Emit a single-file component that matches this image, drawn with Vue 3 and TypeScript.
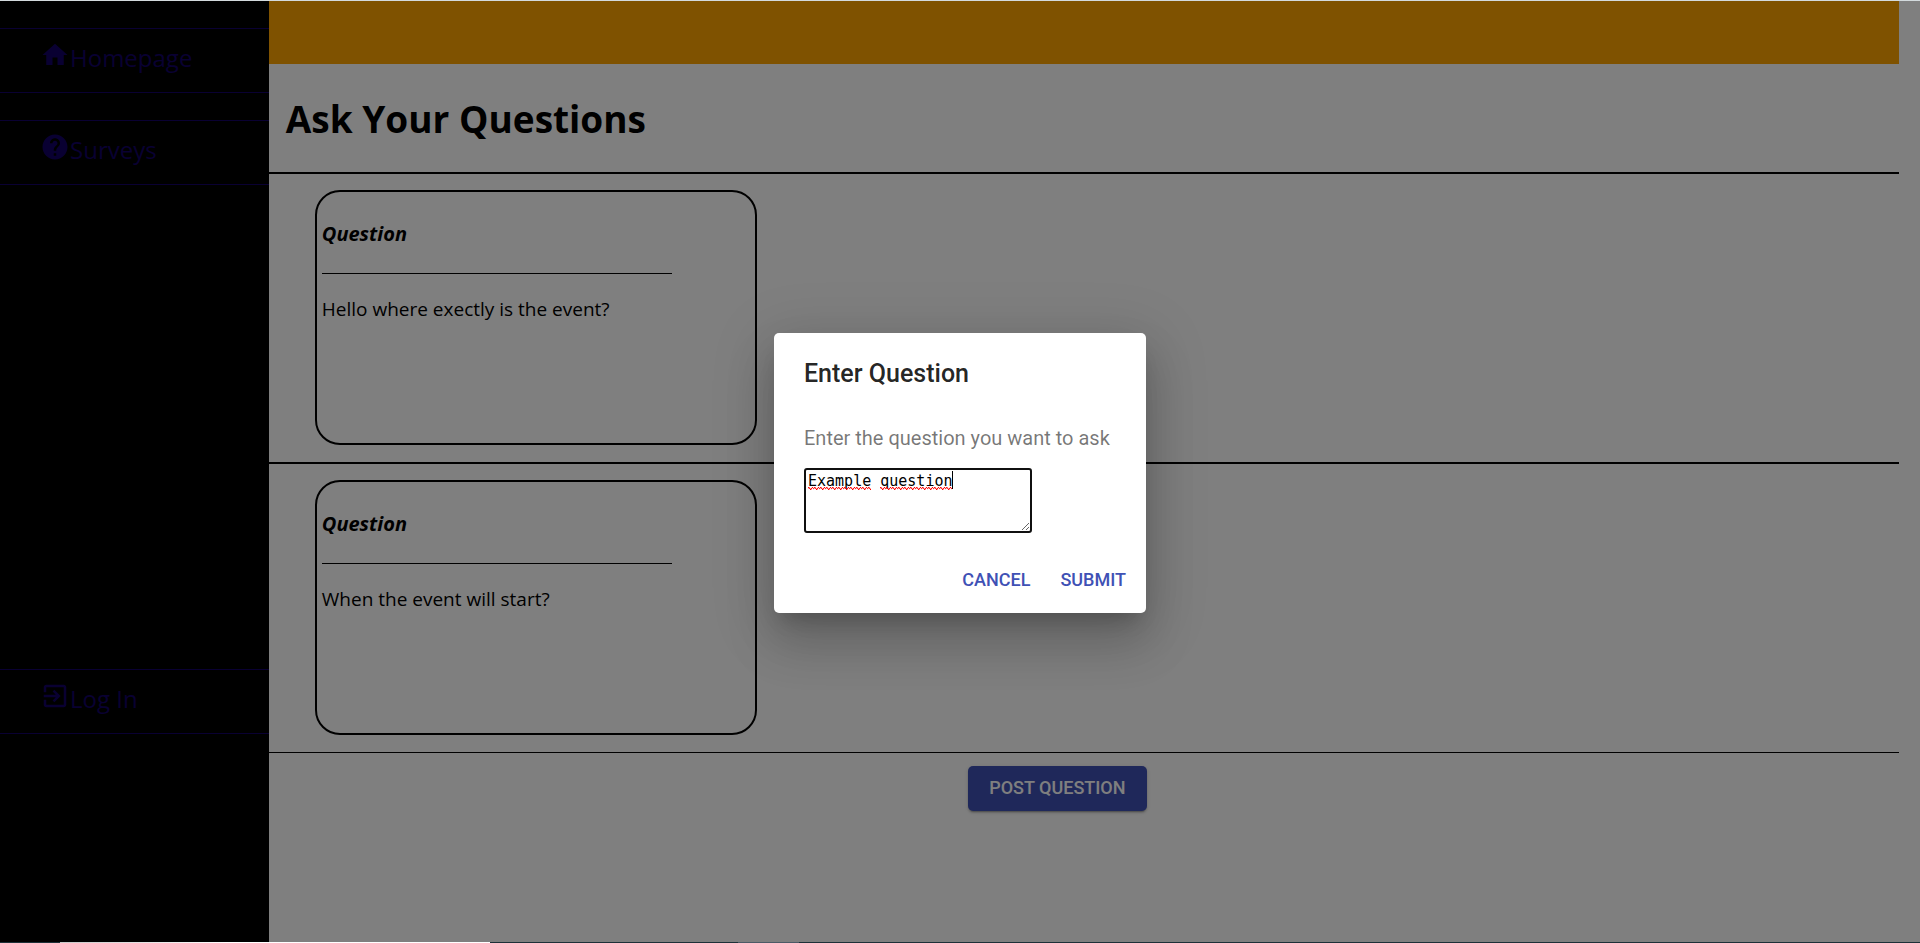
<script setup lang="ts">
import { ref, onMounted } from 'vue'

interface Question {
  id: number
  text: string
}

interface NavItem {
  label: string
  icon: string
}

const topLinks: NavItem[] = [
  { label: 'Homepage', icon: 'M10 20v-6h4v6h5v-8h3L12 3 2 12h3v8z' },
  {
    label: 'Surveys',
    icon: 'M12 2C6.48 2 2 6.48 2 12s4.48 10 10 10 10-4.480 10-10S17.520 2 12 2zm1 17h-2v-2h2v2zm2.070-7.750l-.9.920C13.450 12.900 13 13.500 13 15h-2v-.5c0-1.100.45-2.100 1.170-2.830l1.240-1.260c.37-.36.59-.86.59-1.410 0-1.100-.9-2-2-2s-2 .9-2 2H8c0-2.210 1.790-4 4-4s4 1.790 4 4c0 .88-.36 1.680-.93 2.250z',
  },
]

const loginLink: NavItem = {
  label: 'Log In',
  icon: 'M10.090 15.590L11.500 17l5-5-5-5-1.410 1.410L12.670 11H3v2h9.670l-2.580 2.590zM19 3H5c-1.110 0-2 .9-2 2v4h2V5h14v14H5v-4H3v4c0 1.100.89 2 2 2h14c1.100 0 2-.9 2-2V5c0-1.100-.9-2-2-2z',
}

const questions = ref<Question[]>([
  { id: 1, text: 'Hello where exectly is the event?' },
  { id: 2, text: 'When the event will start?' },
])

const dialogOpen = ref(true)
const draft = ref('Example question')
const field = ref<HTMLTextAreaElement | null>(null)

function submit(): void {
  const text = draft.value.trim()
  if (text) questions.value.push({ id: questions.value.length + 1, text })
  dialogOpen.value = false
}

onMounted(() => {
  const el = field.value
  if (!el) return
  el.focus()
  el.setSelectionRange(el.value.length, el.value.length)
})
</script>

<template>
  <div class="shell">
    <div class="page">
      <nav class="sidebar">
        <a v-for="item in topLinks" :key="item.label" class="nav-link" href="#">
          <svg class="nav-icon" viewBox="0 0 24 24" aria-hidden="true"><path :d="item.icon" /></svg>
          <span>{{ item.label }}</span>
        </a>
        <a class="nav-link login" href="#">
          <svg class="nav-icon" viewBox="0 0 24 24" aria-hidden="true"><path :d="loginLink.icon" /></svg>
          <span>{{ loginLink.label }}</span>
        </a>
      </nav>

      <main class="content">
        <div class="banner"></div>
        <h1 class="heading">Ask Your Questions</h1>
        <section v-for="q in questions" :key="q.id" class="row">
          <article class="card">
            <h2 class="card-title">Question</h2>
            <hr class="card-rule" />
            <p class="card-text">{{ q.text }}</p>
          </article>
        </section>
        <div class="actions">
          <button class="post" type="button" @click="dialogOpen = true">POST QUESTION</button>
        </div>
      </main>
    </div>

    <div v-if="dialogOpen" class="backdrop">
      <form class="dialog" role="dialog" aria-labelledby="dialog-title" @submit.prevent="submit">
        <h2 id="dialog-title" class="dialog-title">Enter Question</h2>
        <label class="dialog-label" for="question">Enter the question you want to ask</label>
        <div class="field">
          <textarea id="question" ref="field" v-model="draft" class="input" rows="2"></textarea>
          <div class="marks" aria-hidden="true">
            <span v-for="(word, i) in draft.split(' ')" :key="i" class="mark" :style="{ width: word.length + 'ch' }"></span>
            <i class="caret"></i>
          </div>
        </div>
        <div class="dialog-actions">
          <button class="text-button" type="button" @click="dialogOpen = false">CANCEL</button>
          <button class="text-button" type="submit">SUBMIT</button>
        </div>
      </form>
    </div>
    <div class="edge"></div>
  </div>
</template>

<style>
body {
  margin: 0;
  background: #fff;
}
</style>

<style scoped>
.shell {
  position: relative;
  display: flex;
  flex-direction: column;
  min-height: 100vh;
  box-sizing: border-box;
  border-top: 1px solid #d3dadd;
  font-family: 'Segoe UI', 'Open Sans', 'Noto Sans', sans-serif;
  color: #000;
}

.page {
  flex: 1;
  display: flex;
  padding-right: 21px;
  background: #fff;
}

.sidebar {
  flex: none;
  width: 14vw;
  padding-top: 27px;
  box-sizing: border-box;
  background: #000;
}

.nav-link {
  display: flex;
  align-items: center;
  height: 63px;
  box-sizing: content-box;
  margin-bottom: 27px;
  padding-left: 40px;
  border-top: 1px solid #130064;
  border-bottom: 1px solid #130064;
  color: #130064;
  font-size: 24px;
  line-height: 32px;
  text-decoration: none;
}

.nav-link span {
  padding-bottom: 6px;
}

.nav-link.login {
  margin-top: 484px;
}

.nav-icon {
  width: 30px;
  height: 30px;
  margin-bottom: 12px;
  fill: currentColor;
}

.content {
  flex: 1;
  min-width: 0;
}

.banner {
  height: 63px;
  background: #ffa500;
}

.heading {
  margin: 0;
  padding: 28px 17px 26px;
  border-bottom: 2px solid #000;
  font-size: 37px;
  font-weight: 700;
  line-height: 54px;
}

.row {
  padding: 16px 46px 17px;
  border-bottom: 2px solid #000;
}

.row:last-of-type {
  border-bottom-width: 1px;
}

.card {
  width: 442px;
  height: 255px;
  box-sizing: border-box;
  padding: 29px 5px 0;
  border: 2px solid #000;
  border-radius: 25px;
}

.card-title {
  margin: 0;
  font-size: 20px;
  font-style: italic;
  font-weight: 700;
  line-height: 26px;
}

.card-rule {
  width: 350px;
  margin: 26px 0 22px;
  border: 0;
  border-top: 1px solid #000;
}

.card-text {
  margin: 0;
  font-size: 19px;
  line-height: 26px;
}

.actions {
  display: flex;
  justify-content: center;
  padding: 13px 53px 20px 0;
}

.post {
  height: 45px;
  padding: 0 21px 2px;
  border: 0;
  border-radius: 5px;
  background: #3f51b5;
  color: #fff;
  font: 500 18px/30px Roboto, sans-serif;
  box-shadow: 0 3px 1px -2px rgba(0, 0, 0, 0.2), 0 2px 2px rgba(0, 0, 0, 0.14), 0 1px 5px rgba(0, 0, 0, 0.12);
}

.backdrop {
  position: absolute;
  inset: 0;
  display: flex;
  align-items: center;
  justify-content: center;
  padding-top: 2px;
  background: rgba(0, 0, 0, 0.5);
}

.dialog {
  min-width: 312px;
  padding: 21px 30px 10px;
  border-radius: 5px;
  background: #fff;
  font-family: Roboto, sans-serif;
  box-shadow: 0 14px 19px -9px rgba(0, 0, 0, 0.2), 0 30px 48px 4px rgba(0, 0, 0, 0.14), 0 11px 58px 10px rgba(0, 0, 0, 0.12);
}

.dialog-title {
  margin: 0 0 29px;
  color: rgba(0, 0, 0, 0.87);
  font-size: 25px;
  font-weight: 500;
  line-height: 40px;
}

.dialog-label {
  display: block;
  color: rgba(0, 0, 0, 0.54);
  font-size: 20px;
  line-height: 30px;
}

.field {
  position: relative;
  width: 228px;
  margin: 15px 0 25px;
  font: 15px/20px 'DejaVu Sans Mono', monospace;
}

.input {
  display: block;
  width: 100%;
  height: 65px;
  box-sizing: border-box;
  padding: 1px 2px;
  border: 2px solid #101010;
  border-radius: 3px;
  outline: 0;
  background: #fff;
  color: #000;
  caret-color: transparent;
  font: inherit;
}

.marks {
  position: absolute;
  top: 3px;
  left: 4px;
  display: flex;
  gap: 1ch;
  pointer-events: none;
}

.mark {
  height: 19px;
  background:
    linear-gradient(45deg, transparent 65%, #f00 80%, transparent 90%),
    linear-gradient(135deg, transparent 5%, #f00 15%, transparent 25%),
    linear-gradient(135deg, transparent 45%, #f00 55%, transparent 65%),
    linear-gradient(45deg, transparent 25%, #f00 35%, transparent 50%);
  background-position: 0 100%;
  background-repeat: repeat-x;
  background-size: 6px 3px;
}

.caret {
  width: 1px;
  height: 18px;
  margin-left: -1ch;
  background: #000;
}

.dialog-actions {
  display: flex;
  justify-content: flex-end;
  gap: 10px;
  margin-right: -20px;
}

.text-button {
  height: 45px;
  padding: 0 10px 2px;
  border: 0;
  background: none;
  color: #3f51b5;
  font: 500 18px/30px Roboto, sans-serif;
}

.edge {
  position: absolute;
  right: 0;
  bottom: 0;
  left: 0;
  height: 1px;
  background: linear-gradient(to right, #1d3038 60px, #c8c8c8 60px, #fff 230px 490px, #1d3038 490px 738px, #4c5a66 738px 799px, #1d3038 799px);
}
</style>
